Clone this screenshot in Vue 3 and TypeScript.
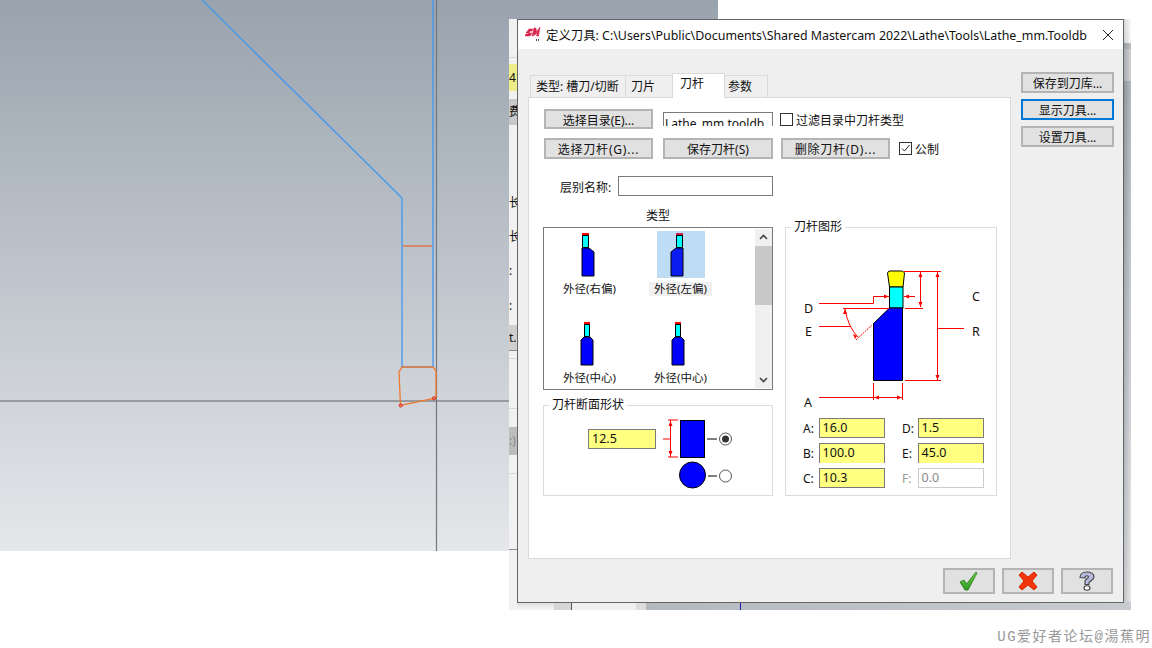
<script setup lang="ts">
interface ToolItem {
  label: string;
  neck: number;
  neckW: number;
  body: number;
  kind: "right" | "left" | "center";
  selected?: boolean;
}

const tools: ToolItem[] = [
  { label: "外径(右偏)", neck: 16, neckW: 7, body: 16, kind: "right" },
  { label: "外径(左偏)", neck: 19, neckW: 7, body: 14, kind: "left", selected: true },
  { label: "外径(中心)", neck: 18, neckW: 6, body: 15, kind: "center" },
  { label: "外径(中心)", neck: 18, neckW: 6, body: 15, kind: "center" },
];

function bodyPath(t: ToolItem): string {
  const l = t.body;
  const r = t.body + 12;
  if (t.kind === "right") return `M${l} 17H${l + 7}L${r} 21V45H${l}Z`;
  if (t.kind === "left") return `M${r} 17H${r - 7}L${l} 21V45H${r}Z`;
  return `M${l} 20L${l + 3} 17H${r - 3}L${r} 20V45H${l}Z`;
}

const fields = [
  { name: "A:", value: "16.0" },
  { name: "D:", value: "1.5" },
  { name: "B:", value: "100.0", clip: true },
  { name: "E:", value: "45.0", clip: true },
  { name: "C:", value: "10.3" },
  { name: "F:", value: "0.0", off: true },
];
</script>

<template>
  <div class="desk">
    <svg class="viewport" width="718" height="551" viewBox="0 0 718 551">
      <defs>
        <linearGradient id="vp" x1="0" y1="0" x2="0" y2="1">
          <stop offset="0" stop-color="#99a3ae" />
          <stop offset="1" stop-color="#e5e7ea" />
        </linearGradient>
      </defs>
      <rect width="718" height="551" fill="url(#vp)" />
      <path d="M0 401H509" stroke="#5f6368" stroke-width="1" fill="none" />
      <path d="M436.5 0V551" stroke="#73777c" stroke-width="1.2" fill="none" />
      <path d="M202 0L402 198V367H433V0" stroke="#3f97ee" stroke-width="1.3" fill="none" />
      <path d="M403 246H432" stroke="#e8682c" stroke-width="1.2" />
      <path d="M400.5 405.5L399 372L402 367H433L436 371V398Z" stroke="#ee7a30" stroke-width="1.3" fill="none" />
      <circle cx="400.7" cy="405.5" r="1.6" fill="none" stroke="#e0201c" />
      <circle cx="434" cy="398.3" r="1.6" fill="none" stroke="#e0201c" />
    </svg>

    <div class="strip-back">
      <div class="strip-left">
        <span class="sl yellow">41</span>
        <span class="sl grey">费</span>
        <span class="sl plain s1">长</span>
        <span class="sl plain s2">长</span>
        <span class="sl plain s3">:</span>
        <span class="sl plain s4">:</span>
        <span class="sl grey s5">t.</span>
        <span class="sl grey s6">:)</span>
        <i class="sl-line l1"></i>
        <i class="sl-line l2"></i>
        <i class="sl-line l3"></i>
        <i class="sl-line l4"></i>
        <i class="sl-line dark l5"></i>
        <i class="sl-line dark l6"></i>
      </div>
      <div class="strip-right"></div>
      <div class="strip-bottom">
        <span class="sb-a"></span>
        <span class="sb-b"></span>
        <span class="sb-c"></span>
        <span class="sb-d"><i></i></span>
      </div>
    </div>

    <div class="dialog">
      <header class="titlebar">
        <svg class="logo" width="16" height="16" viewBox="0 0 16 16">
          <path d="M1 7L4 3H8L7 5H5L4 7H7L5 10H0L1 8H3L4 7Z" fill="#d8234a" stroke="#d8234a" stroke-width="0.5" />
          <path d="M7 10L9 2H11L11.5 6L15 1L13.5 10H11.5L12.5 6L10 9H9.5L9.5 6L8.5 10Z" fill="#d8234a" stroke="#d8234a" stroke-width="0.5" />
          <path d="M11 13h1v2h-1zM13 13h1v2h-1z" fill="#555" />
        </svg>
        <span class="title">定义刀具: C:\Users\Public\Documents\Shared Mastercam 2022\Lathe\Tools\Lathe_mm.Tooldb</span>
        <svg class="close" width="12" height="12" viewBox="0 0 12 12">
          <path d="M1 1L11 11M11 1L1 11" stroke="#222" stroke-width="1" fill="none" />
        </svg>
      </header>

      <div class="content">
        <div class="main-col">
          <div class="tabs">
            <span class="tab t1">类型: 槽刀/切断</span>
            <span class="tab t2">刀片</span>
            <span class="tab active">刀杆</span>
            <span class="tab t4">参数</span>
          </div>

          <div class="panel">
            <div class="row r1">
              <button class="btn w109">选择目录(E)...</button>
              <span class="dir">Lathe_mm.tooldb</span>
              <span class="check"></span>
              <span class="check-label">过滤目录中刀杆类型</span>
            </div>
            <div class="row r2">
              <button class="btn w109 spaced">选择刀杆(G)...</button>
              <button class="btn w110">保存刀杆(S)</button>
              <button class="btn w109 spaced">删除刀杆(D)...</button>
              <span class="check on">
                <svg width="11" height="11" viewBox="0 0 11 11">
                  <path d="M2 5.5L4.5 8L9.5 2" stroke="#222" stroke-width="1" fill="none" />
                </svg>
              </span>
              <span class="check-label">公制</span>
            </div>
            <div class="row r3">
              <span class="name-label">层别名称:</span>
              <span class="name-input"></span>
            </div>

            <div class="lower">
              <div class="left-col">
                <div class="list-title">类型</div>
                <div class="listbox">
                  <div class="list-grid">
                    <div v-for="(t, i) in tools" :key="i" class="cell">
                      <svg class="tool" :class="{ sel: t.selected }" width="48" height="47" viewBox="0 0 48 47">
                        <rect :x="t.neck" y="2" :width="t.neckW" height="2.4" :fill="t.selected ? '#c8204a' : '#ff0000'" />
                        <rect :x="t.neck + 0.5" y="4.5" :width="t.neckW - 1" height="12" fill="#00ffff" stroke="#000" />
                        <path :d="bodyPath(t)" :fill="t.selected ? '#0a1cf0' : '#0000ff'" stroke="#000" stroke-width="1" />
                      </svg>
                      <span class="cell-label" :class="{ sel: t.selected }">{{ t.label }}</span>
                    </div>
                  </div>
                  <div class="scroll">
                    <svg width="17" height="17" viewBox="0 0 17 17">
                      <path d="M5 10L8.5 6.5L12 10" stroke="#444" stroke-width="1.6" fill="none" />
                    </svg>
                    <div class="thumb"></div>
                    <svg class="down" width="17" height="17" viewBox="0 0 17 17">
                      <path d="M5 7L8.5 10.5L12 7" stroke="#444" stroke-width="1.6" fill="none" />
                    </svg>
                  </div>
                </div>

                <fieldset class="group section">
                  <legend>刀杆断面形状</legend>
                  <span class="field-input section-input">12.5</span>
                  <svg class="section-svg" width="80" height="80" viewBox="0 0 80 80">
                    <path d="M7 9H17M7 46H17M9.5 9V46M2 28H9.5" stroke="#ff0000" fill="none" />
                    <path d="M9.5 10L7.5 15H11.5ZM9.5 45L7.5 40H11.5Z" fill="#ff0000" />
                    <rect x="19.5" y="9.5" width="24" height="37" fill="#0000ff" stroke="#000" />
                    <circle cx="31.5" cy="64" r="13" fill="#0000ff" stroke="#000" />
                    <path d="M46 28H56M47 65H56" stroke="#000" />
                    <circle cx="64.5" cy="28" r="6" fill="#fff" stroke="#555" />
                    <circle cx="64.5" cy="28" r="3.5" fill="#333" />
                    <circle cx="64.5" cy="65" r="6" fill="#fff" stroke="#555" />
                  </svg>
                </fieldset>
              </div>

              <fieldset class="group shape">
                <legend>刀杆图形</legend>
                <svg class="drawing" width="210" height="185" viewBox="0 0 210 185">
                  <g transform="translate(-786 -232)">
                    <path d="M889 271H902.5L904.5 273L903 287H889.5L887.5 273Z" fill="#ffff00" stroke="#000" />
                    <rect x="889.5" y="287" width="13.5" height="21" fill="#00ffff" stroke="#000" />
                    <path d="M889.5 308H902.5V380.5H873.5V323.5Z" fill="#0000ff" stroke="#000" />
                    <g stroke="#ff0000" fill="none">
                      <path d="M904 271.5H941M905 308.5H923M920.5 272V307M937.5 272V380M905 380.5H941M938 328.5H964" />
                      <path d="M819 303.5H873.5V296.5H889M904 296.5H915M819 326.5H850M843 308.5H889" />
                      <path d="M845 309Q848 327 858 337" />
                      <path d="M856 340L872 325" stroke-dasharray="2 1" />
                      <path d="M819 397.5H902M873.5 383V400M902.5 383V400" />
                    </g>
                    <g fill="#ff0000">
                      <path d="M920.5 272L918.5 277H922.5ZM920.5 307L918.5 302H922.5ZM937.5 272L935.5 277H939.5ZM937.5 380L935.5 375H939.5Z" />
                      <path d="M889 296.5L884 294.5V298.5ZM904 296.5L909 294.5V298.5ZM845 309L843 314H847Z" />
                      <path d="M874 397.5L879 395.5V399.5ZM902 397.5L897 395.5V399.5ZM857 336L853 334L855 339Z" />
                    </g>
                    <g class="dim-letters">
                      <text x="804" y="313">D</text>
                      <text x="805" y="336">E</text>
                      <text x="972" y="301">C</text>
                      <text x="972" y="336">R</text>
                      <text x="804" y="407">A</text>
                    </g>
                  </g>
                </svg>
                <div class="fields">
                  <div v-for="f in fields" :key="f.name" class="field" :class="{ off: f.off }">
                    <span class="field-name">{{ f.name }}</span>
                    <span class="field-input" :class="{ off: f.off, clip: f.clip }">{{ f.value }}</span>
                  </div>
                </div>
              </fieldset>
            </div>
          </div>

          <div class="actions">
            <button class="btn act">
              <svg width="20" height="20" viewBox="0 0 20 20">
                <defs>
                  <linearGradient id="ok" x1="0" y1="0" x2="0" y2="1">
                    <stop offset="0" stop-color="#7ed048" />
                    <stop offset="1" stop-color="#2a9a22" />
                  </linearGradient>
                </defs>
                <path d="M1 11L5 9L7.5 13L17 1L18 2L9 19H6Z" fill="url(#ok)" stroke="#1c7a18" stroke-width="0.8" />
              </svg>
            </button>
            <button class="btn act">
              <svg width="20" height="20" viewBox="0 0 20 20">
                <path d="M1 4L4 1L10 6L16 1L19 4L14 10L19 16L16 19L10 14L4 19L1 16L6 10Z" fill="#f0360a" stroke="#d82a00" stroke-width="1" />
              </svg>
            </button>
            <button class="btn act">
              <svg width="18" height="20" viewBox="0 0 18 20">
                <path d="M2 6.5C2 3 5 1 8.5 1C13 1 16 3 16 6C16 9 12.5 9.5 11 11.5V13.5H7V10C7 8 10.5 7.5 10.5 5.8C10.5 5 9.5 4.8 8.8 4.8C8 4.8 7 5.5 7 7Z" fill="#b6b8dc" stroke="#444" stroke-width="1.1" />
                <ellipse cx="9" cy="17" rx="3" ry="2.2" fill="#fff" stroke="#444" stroke-width="1.1" />
              </svg>
            </button>
          </div>
        </div>

        <div class="side">
          <button class="btn side-btn">保存到刀库...</button>
          <button class="btn side-btn focus">显示刀具...</button>
          <button class="btn side-btn">设置刀具...</button>
        </div>
      </div>
    </div>

    <div class="watermark">UG爱好者论坛@湯蕉明</div>
  </div>
</template>

<style>
html,
body {
  margin: 0;
  background: #fff;
}
</style>

<style scoped>
.desk {
  position: relative;
  width: 1152px;
  height: 648px;
  overflow: hidden;
  background: #fff;
  font-family: "Noto Sans", "Noto Sans CJK SC", sans-serif;
  font-size: 12px;
  color: #111;
}

.viewport {
  position: absolute;
  left: 0;
  top: 0;
}

.strip-back {
  position: absolute;
  left: 509px;
  top: 19px;
  width: 622px;
  height: 591px;
}

.strip-left {
  position: absolute;
  left: 0;
  top: 0;
  bottom: 0;
  width: 8px;
  background: #f1f1f1;
  overflow: hidden;
}

.sl {
  position: absolute;
  left: 0;
  width: 8px;
  font-size: 12px;
  line-height: 14px;
  white-space: nowrap;
  overflow: hidden;
}

.sl-line {
  position: absolute;
  left: 0;
  width: 8px;
  height: 1px;
  background: #d8d8d8;
}

.sl-line.dark {
  background: #8a8a8a;
}

.l1 {
  top: 38px;
}

.l2 {
  top: 339px;
}

.l3 {
  top: 389px;
}

.l4 {
  top: 454px;
}

.l5 {
  top: 331px;
}

.l6 {
  top: 530px;
}

.yellow {
  top: 45px;
  height: 27px;
  line-height: 27px;
  background: #eeee88;
}

.grey {
  top: 80px;
  height: 26px;
  line-height: 26px;
  background: #c9c9c9;
}

.s1 {
  top: 177px;
}

.s2 {
  top: 211px;
}

.s3 {
  top: 245px;
}

.s4 {
  top: 280px;
}

.grey.s5 {
  top: 306px;
  height: 25px;
  line-height: 25px;
  background: #cfcfcf;
}

.grey.s6 {
  top: 408px;
  height: 28px;
  line-height: 28px;
  background: #bdbdbd;
  color: #888;
}

.strip-right {
  position: absolute;
  right: 0;
  top: 0;
  bottom: 0;
  width: 8px;
  background:
    linear-gradient(90deg, rgba(60, 65, 70, 0.22), rgba(255, 255, 255, 0.25)),
    linear-gradient(
      #fafafa 0,
      #f4f4f4 24px,
      #a8adb2 24px,
      #a8adb2 30px,
      #c0c3c7 30px,
      #c0c3c7 62px,
      #9ca4ac 62px,
      #e0e2e4 100%
    );
}

.strip-bottom {
  position: absolute;
  left: 8px;
  right: 0;
  bottom: 0;
  height: 8px;
  display: flex;
  background: #fff;
}

.sb-a {
  width: 37px;
  background: linear-gradient(#dcdcdc, #f8f8f8);
}

.sb-b {
  width: 17px;
  background: #d6d6d6;
  border-right: 1px solid #555;
}

.sb-c {
  width: 64px;
  background: #f0f0f0;
}

.sb-d {
  flex: 1;
  position: relative;
  background: linear-gradient(90deg, #b4b9c0, #c8ccd0);
  border-left: 10px solid #dddddd;
}

.sb-d i {
  position: absolute;
  left: 94px;
  top: 0;
  width: 1px;
  height: 8px;
  background: #1a1ab0;
}

.dialog {
  position: absolute;
  left: 517px;
  top: 19px;
  width: 607px;
  height: 584px;
  box-sizing: border-box;
  border: 1px solid #666;
  background: #efefef;
  display: flex;
  flex-direction: column;
}

.titlebar {
  height: 29px;
  flex: none;
  background: #fff;
  display: flex;
  align-items: center;
  padding-left: 7px;
}

.logo {
  flex: none;
  margin-top: -2px;
}

.title {
  margin-left: 5px;
  font-size: 12.4px;
  white-space: nowrap;
  color: #111;
}

.close {
  margin-left: auto;
  margin-right: 9px;
  flex: none;
}

.content {
  flex: 1;
  display: flex;
  padding: 24px 0 0 10px;
}

.main-col {
  width: 483px;
  display: flex;
  flex-direction: column;
}

.tabs {
  height: 24px;
  display: flex;
  align-items: flex-end;
  padding-left: 2px;
  position: relative;
  z-index: 1;
}

.tab {
  box-sizing: border-box;
  height: 22px;
  line-height: 21px;
  padding: 0 5px;
  border: 1px solid #d9d9d9;
  border-bottom: none;
  margin-right: -1px;
  white-space: nowrap;
}

.t1 {
  width: 96px;
}

.t2 {
  width: 48px;
}

.active {
  width: 53px;
  background: #fff;
  line-height: 20px;
  margin-bottom: -1px;
  height: 25px;
  padding-left: 7px;
}

.t4 {
  width: 44px;
  padding-left: 3px;
}

.panel {
  box-sizing: border-box;
  height: 462px;
  background: #fff;
  border: 1px solid #d9d9d9;
  padding: 11px 15px 0;
}

.row {
  display: flex;
  align-items: center;
}

.btn {
  box-sizing: border-box;
  font: inherit;
  color: #111;
  background: #e1e1e1;
  border: 2px solid #b4b4b4;
  padding: 0;
  white-space: nowrap;
}

.w109 {
  width: 109px;
}

.w110 {
  width: 110px;
}

.r1 {
  height: 20px;
}

.r1 .btn {
  height: 20px;
  margin-right: 10px;
}

.dir {
  box-sizing: border-box;
  width: 110px;
  height: 14px;
  border: 1px solid #7a7a7a;
  border-bottom: none;
  padding: 3px 0 0 1px;
  line-height: 16px;
  overflow: hidden;
  white-space: nowrap;
  margin-right: 7px;
  font-size: 12px;
  align-self: flex-end;
  margin-bottom: 3px;
}

.check {
  box-sizing: border-box;
  width: 13px;
  height: 13px;
  border: 1px solid #333;
  background: #fff;
  margin-right: 3px;
  flex: none;
  display: flex;
}

.check-label {
  white-space: nowrap;
  padding-top: 1px;
}

.r2 {
  height: 21px;
  margin-top: 9px;
}

.r2 .btn {
  height: 21px;
  margin-right: 8px;
}

.r2 .btn:first-child {
  margin-right: 10px;
}

.r2 .btn:nth-child(3) {
  margin-right: 9px;
}

.spaced {
  letter-spacing: 0.8px;
}

.r3 {
  height: 20px;
  margin-top: 17px;
}

.name-label {
  width: 67px;
  padding-left: 16px;
  box-sizing: border-box;
  white-space: nowrap;
  font-size: 12px;
  margin-right: 7px;
  padding-top: 2px;
}

.name-input {
  box-sizing: border-box;
  width: 155px;
  height: 20px;
  border: 1px solid #7a7a7a;
}

.lower {
  display: flex;
  margin-top: 11px;
  gap: 12px;
}

.left-col {
  flex: none;
  width: 230px;
  margin-left: -1px;
}

.list-title {
  text-align: center;
  height: 20px;
  line-height: 17px;
  padding-left: 0;
}

.listbox {
  box-sizing: border-box;
  height: 163px;
  width: 230px;
  border: 1px solid #7a7a7a;
  display: flex;
  overflow: hidden;
}

.list-grid {
  width: 211px;
  display: grid;
  grid-template-columns: 91px 91px;
  grid-auto-rows: 89px;
  justify-content: start;
}

.cell {
  display: flex;
  flex-direction: column;
  align-items: center;
  padding-top: 3px;
}

.tool {
  display: block;
}

.tool.sel {
  background: #bfdcf5;
}

.cell-label {
  line-height: 14px;
  margin-top: 4px;
  padding: 0 5px;
  white-space: nowrap;
  font-size: 11.5px;
}

.cell-label.sel {
  background: #f0f0f0;
}

.scroll {
  width: 17px;
  margin: 1px 0;
  background: #f0f0f0;
  display: flex;
  flex-direction: column;
}

.scroll svg {
  flex: none;
}

.scroll .down {
  margin-top: auto;
}

.thumb {
  height: 59px;
  background: #c8c8c8;
}

.group {
  box-sizing: border-box;
  margin: 0;
  border: 1px solid #dcdcdc;
  padding: 0;
  min-width: 0;
}

.group legend {
  margin-left: 5px;
  padding: 0 3px;
  font-size: 12px;
  line-height: 14px;
}

.section {
  width: 230px;
  height: 98px;
  margin-top: 8px;
  display: flex;
  align-items: flex-start;
}

.section-input {
  margin: 17px 0 0 44px;
  width: 68px;
  height: 20px;
}

.section-svg {
  margin: -1px 0 0 5px;
  flex: none;
}

.field-input {
  box-sizing: border-box;
  display: block;
  border: 1px solid #7a7a7a;
  background: #ffff80;
  padding-left: 3px;
  line-height: 18px;
  color: #111;
  font-size: 12.5px;
}

.shape {
  flex: none;
  width: 212px;
  height: 276px;
  margin-top: 13px;
}

.drawing {
  display: block;
  margin-top: -2px;
}

.dim-letters {
  font-size: 12.5px;
  fill: #111;
}

.fields {
  display: grid;
  grid-template-columns: 99px 99px;
  grid-auto-rows: 25px;
  margin-top: 1px;
}

.field {
  display: flex;
  align-items: flex-start;
}

.field-name {
  width: 33px;
  padding-left: 17px;
  box-sizing: border-box;
  white-space: nowrap;
  line-height: 22px;
}

.field .field-input {
  width: 68px;
  height: 20px;
}

.field-input.clip {
  border-bottom: none;
}

.field-input.off {
  background: #fff;
  border-color: #ccc;
  color: #888;
}

.field.off .field-name {
  color: #999;
}

.actions {
  display: flex;
  justify-content: flex-end;
  gap: 7px;
  padding: 9px 1px 0 0;
  margin-right: -103px;
}

.act {
  width: 52px;
  height: 26px;
  display: flex;
  align-items: center;
  justify-content: center;
}

.side {
  display: flex;
  flex-direction: column;
  gap: 6px;
  margin-left: 10px;
  margin-top: -1px;
  width: 93px;
}

.side-btn {
  height: 21px;
}

.focus {
  border-color: #0078d7;
}

.watermark {
  position: absolute;
  right: 1px;
  top: 625px;
  font-family: "Liberation Mono", "Noto Sans CJK SC", monospace;
  font-size: 14px;
  color: #999;
  white-space: nowrap;
  letter-spacing: 1.5px;
}
</style>
